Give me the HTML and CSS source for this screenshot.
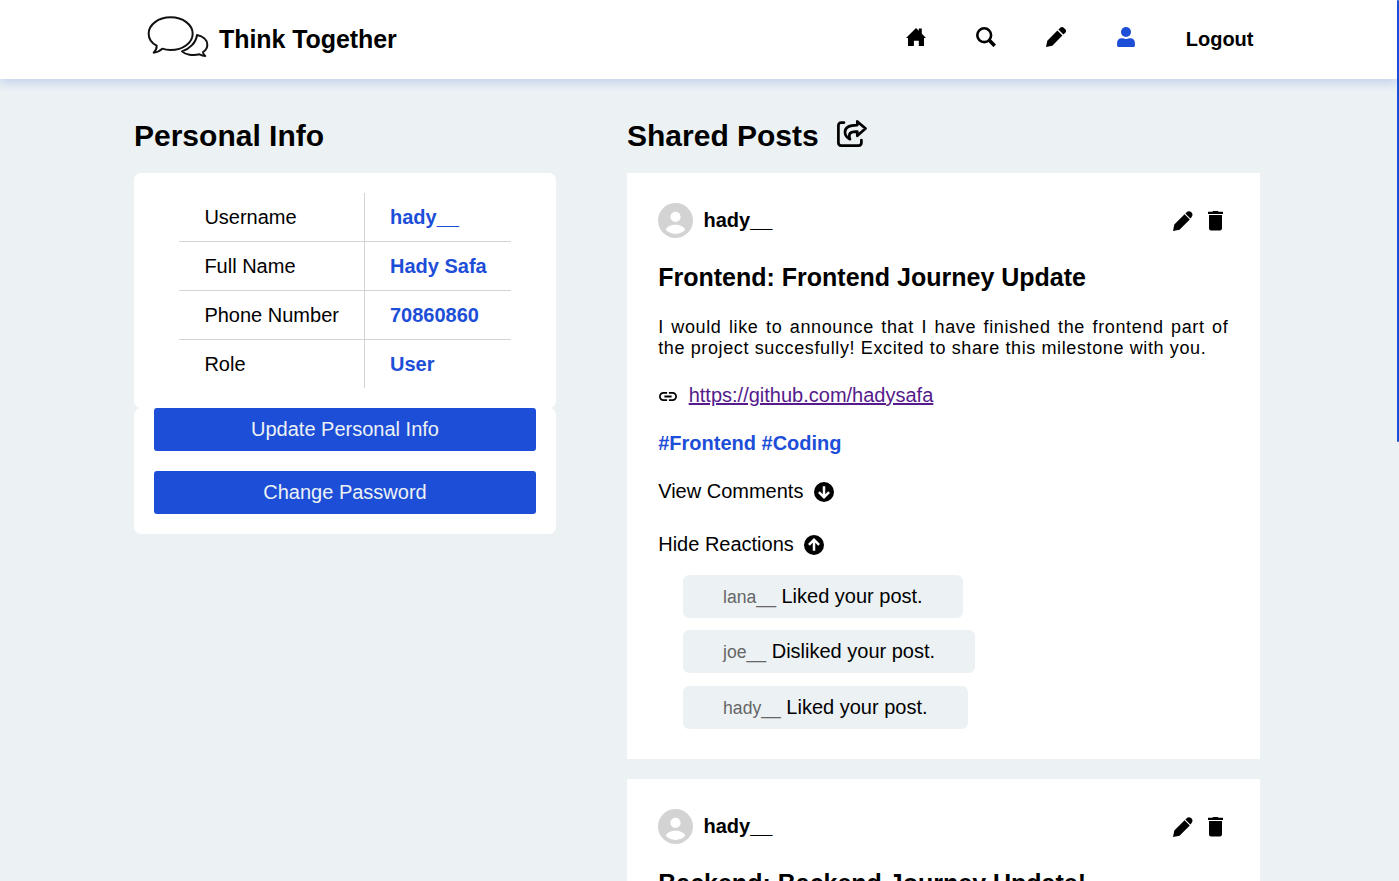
FILE: index.html
```html
<!DOCTYPE html>
<html lang="en">
<head>
<meta charset="utf-8">
<title>Think Together</title>
<link rel="stylesheet" href="styles.css">
</head>
<body>
<svg class="sprite" aria-hidden="true">
  <symbol id="pencil" viewBox="0 0 20 20"><path d="M0 20l1.3-6.2L11.4 3.6l5 5L6.3 18.7zM12.4 2.6l1.9-1.9c1-1 2.5-.9 3.400 0l1.600 1.600c1 1 1 2.400 0 3.400l-1.900 1.900z"/></symbol>
  <symbol id="pencil-round" viewBox="0 0 20 20"><path d="M0 20l1.300-6.500L11.600 3.200l5.200 5.200L6.500 18.700zM12.400 2.400l1-1c1.500-1.600 3.500-1.600 5-.1s1.500 3.600-.1 5.100l-1 1z"/></symbol>
  <symbol id="trash" viewBox="0 0 15 20"><path d="M0 .8h4.300L5.200 0h4.600l.9.800H15v2.100H0zM1 4.100h13v13.200c0 1.300-.9 2.100-2 2.100H3c-1.200 0-2-.8-2-2.100z"/></symbol>
  <symbol id="avatar" viewBox="0 0 35 35"><circle cx="17.500" cy="17.500" r="17.500" fill="#d3d3d3"/><circle cx="17.500" cy="13.800" r="5.100" fill="#fff"/><path d="M7.800 26.800c1.200-3.300 5.500-5 9.700-5s8.500 1.700 9.700 5c-2.300 2.600-5.800 4.100-9.700 4.100s-7.400-1.500-9.700-4.100z" fill="#fff"/></symbol>
</svg>
<header class="header">
  <div class="brand">
    <svg class="logo" viewBox="48 45 192 132" fill="none" stroke="#111" stroke-width="6" stroke-linejoin="round"><path d="M97 146c8 3 16 4 25 4 37 0 66-22 66-49s-29-49-66-49-66 22-66 49c0 15 9 28 24 36 1 9-3 15-9 21 10-1 19-5 26-12z"/><path d="M201 105c18 4 31 15 31 29 0 9-5 17-13 22 0 5 2 9 7 12-7 0-12-2-17-5-21 5-43 1-53-9 23-7 42-26 45-49z"/></svg>
    <span class="brand-name">Think Together</span>
  </div>
  <nav class="nav">
    <svg class="nav-icon" viewBox="0 0 20 20"><path d="M10 1l2.800 2.800V1.600h3v5.200L20 11h-2v8h-5.200v-5.300H7.900V19H2v-8H0z"/></svg>
    <svg class="nav-icon" viewBox="0 0 20 20" fill="none" stroke="#000"><circle cx="8.200" cy="8.200" r="6.900" stroke-width="2.600"/><path d="M13 13l5.800 5.800" stroke-width="3.700"/></svg>
    <svg class="nav-icon" viewBox="0 0 20 20"><use href="#pencil"/></svg>
    <svg class="nav-icon active" viewBox="0 0 20 20"><circle cx="10" cy="5" r="5"/><path d="M1.100 18.500V16c0-3 1.800-4.700 4.600-4.700 1.400 0 2.300.7 4.300.7s2.900-.7 4.300-.7c2.800 0 4.600 1.700 4.600 4.700v2.500c0 .9-.6 1.500-1.400 1.500h-15c-.8 0-1.400-.6-1.400-1.500z"/></svg>
    <a class="logout">Logout</a>
  </nav>
</header>
<main class="main">
  <section class="personal">
    <h2 class="heading">Personal Info</h2>
    <div class="info-card">
      <table class="info">
        <tr><td>Username</td><td>hady__</td></tr>
        <tr><td>Full Name</td><td>Hady Safa</td></tr>
        <tr><td>Phone Number</td><td>70860860</td></tr>
        <tr><td>Role</td><td>User</td></tr>
      </table>
    </div>
    <div class="actions">
      <button class="button">Update Personal Info</button>
      <button class="button">Change Password</button>
    </div>
  </section>
  <section class="posts">
    <h2 class="heading">Shared Posts
      <svg class="share" viewBox="0 0 30 27" fill="none" stroke="#000" stroke-width="2.700" stroke-linejoin="round" stroke-linecap="round"><path d="M7 2.600H4.200c-1.700 0-2.800 1.100-2.800 2.800v17.400c0 1.700 1.100 2.800 2.800 2.800h17.400c1.700 0 2.800-1.100 2.800-2.800V20"/><path d="M20.300 1.400l8.200 7.200-8.200 7.200v-4.200c-4.500-.2-8 .8-8 4.200 0 1.300.2 2.300.7 3.400C9.800 17.500 8 15 8 12.300c0-5 4.300-7.300 12.300-7.200z"/></svg>
    </h2>
    <article class="post">
      <div class="post-head">
        <svg class="avatar"><use href="#avatar"/></svg><span class="author">hady__</span>
        <svg class="edit"><use href="#pencil-round"/></svg><svg class="trash"><use href="#trash"/></svg>
      </div>
      <h3 class="title">Frontend: Frontend Journey Update</h3>
      <p class="text">I would like to announce that I have finished the frontend part of the project succesfully! Excited to share this milestone with you.</p>
      <div class="link-row"><svg class="link-icon" viewBox="2 7 20 10"><path d="M3.900 12c0-1.710 1.390-3.100 3.100-3.100h4V7H7c-2.760 0-5 2.240-5 5s2.240 5 5 5h4v-1.900H7c-1.710 0-3.100-1.390-3.100-3.100zM8 13h8v-2H8v2zm9-6h-4v1.900h4c1.710 0 3.100 1.390 3.100 3.100s-1.390 3.100-3.100 3.100h-4V17h4c2.760 0 5-2.240 5-5s-2.240-5-5-5z"/></svg><a class="link">https://github.com/hadysafa</a></div>
      <div class="tags">#Frontend #Coding</div>
      <div class="toggle">View Comments<svg class="arrow" viewBox="0 0 20 20"><circle cx="10" cy="10" r="10"/><path d="M10 4.200v11M4.900 10.200l5.100 5.100 5.100-5.100" fill="none" stroke="#fff" stroke-width="2.500"/></svg></div>
      <div class="toggle second">Hide Reactions<svg class="arrow" viewBox="0 0 20 20"><circle cx="10" cy="10" r="10"/><path d="M10 15.800v-11M4.900 9.800L10 4.700l5.100 5.100" fill="none" stroke="#fff" stroke-width="2.500"/></svg></div>
      <div class="reactions">
        <div class="reaction"><span class="who">lana__</span> Liked your post.</div>
        <div class="reaction"><span class="who">joe__</span> Disliked your post.</div>
        <div class="reaction"><span class="who">hady__</span> Liked your post.</div>
      </div>
    </article>
    <article class="post">
      <div class="post-head">
        <svg class="avatar"><use href="#avatar"/></svg><span class="author">hady__</span>
        <svg class="edit"><use href="#pencil-round"/></svg><svg class="trash"><use href="#trash"/></svg>
      </div>
      <h3 class="title">Backend: Backend Journey Update!</h3>
    </article>
  </section>
</main>
<div class="scroll-thumb"></div>
</body>
</html>
```
FILE: styles.css
```css
* { box-sizing: border-box; margin: 0; padding: 0; }
body {
  height: 881px;
  overflow: hidden;
  background: #ecf2f4;
  font: 20px/23px "Liberation Sans", Arial, sans-serif;
  color: #000;
}
svg { display: block; flex: none; }
.sprite { width: 0; height: 0; position: absolute; }
.header {
  display: flex;
  justify-content: space-between;
  align-items: center;
  height: 79px;
  padding: 0 145.500px 0 146px;
  background: #fff;
  box-shadow: 0 4px 10px rgba(29, 78, 216, .2);
}
.brand { display: flex; align-items: center; gap: 9px; }
.logo { width: 64px; height: 44px; margin-bottom: 5px; }
.brand-name { font-size: 25px; font-weight: 700; letter-spacing: -.07px; }
.nav { display: flex; align-items: center; gap: 50px; }
.nav-icon { width: 20px; height: 20px; margin-bottom: 5px; }
.active { fill: #1d4ed8; }
.logout { font-weight: 700; }
.main { display: flex; gap: 71px; padding: 40px 139px 0 134px; }
.personal { width: 422px; }
.posts { width: 633px; }
.heading {
  display: flex;
  align-items: center;
  gap: 18px;
  height: 34px;
  margin-bottom: 20px;
  font-size: 30px;
  line-height: 34px;
}
.share { width: 30px; height: 27px; margin-bottom: 5px; }
.info-card { padding: 20px 0; background: #fff; border-radius: 7px; }
.info { width: 332px; margin: 0 auto; border-collapse: separate; border-spacing: 0; }
.info td { height: 49px; padding: 0 0 0 25px; border-bottom: 1px solid #d3d3d3; }
.info td:first-child { width: 186px; padding-left: 25.400px; border-right: 1px solid #d3d3d3; }
.info td:last-child { color: #1d4ed8; font-weight: 700; }
.info tr:last-child td { height: 48px; border-bottom: 0; }
.actions {
  display: flex;
  flex-direction: column;
  gap: 20px;
  padding: 0 20px 20px;
  background: #fff;
  border-radius: 7px;
}
.button {
  height: 43px;
  border: 0;
  border-radius: 3px;
  background: #1d4ed8;
  color: #ecf2f4;
  font: inherit;
}
.post {
  height: 586px;
  margin-bottom: 20px;
  padding: 30px 31.650px 30px 31.200px;
  background: #fff;
}
.post-head { display: flex; align-items: center; height: 35px; }
.avatar { width: 35px; height: 35px; margin-right: 10.300px; }
.author { flex: 1; font-weight: 700; }
.edit { width: 20px; height: 20px; margin-right: 15px; }
.trash { width: 15px; height: 20px; margin-right: 5px; }
.title { margin-top: 25px; font-size: 25px; line-height: 28px; }
.text {
  margin-top: 26px;
  font-size: 18px;
  line-height: 21px;
  letter-spacing: .620px;
  text-align: justify;
}
.link-row { display: flex; align-items: center; margin-top: 25px; }
.link-icon { width: 18px; height: 9px; margin: 1px 12px 0 .500px; }
.link { color: #551a8b; text-decoration: underline; }
.tags { margin-top: 25px; color: #1d4ed8; font-weight: 700; }
.toggle { display: flex; align-items: center; gap: 10.500px; margin-top: 25px; }
.second { margin-top: 30px; }
.arrow { width: 20px; height: 20px; }
.reactions {
  display: flex;
  flex-direction: column;
  align-items: flex-start;
  gap: 12.400px;
  margin: 19px 0 0 24.900px;
}
.reaction { height: 43px; padding: 10px 40px; border-radius: 6px; background: #ecf2f4; }
.who { color: #666; font-size: 17.600px; }
.scroll-thumb {
  position: fixed;
  top: 0;
  right: 0;
  width: 2px;
  height: 442px;
  background: #1d4ed8;
  border-radius: 1px;
}
```
